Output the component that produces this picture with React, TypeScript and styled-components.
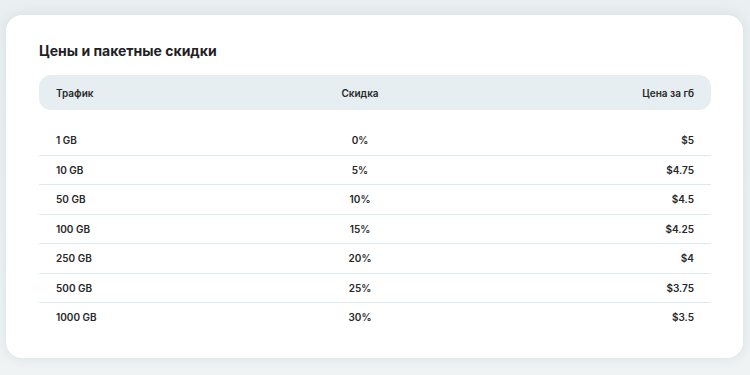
import React from 'react';
import styled, { createGlobalStyle } from 'styled-components';

const GlobalStyle = createGlobalStyle`
  html, body {
    margin: 0;
    padding: 0;
    background: #edf1f3;
    font-family: Inter, "Noto Sans", sans-serif;
  }
`;

type Row = {
  traffic: string;
  discount: string;
  price: string;
};

const rows: Row[] = [
  { traffic: '1 GB', discount: '0%', price: '$5' },
  { traffic: '10 GB', discount: '5%', price: '$4.75' },
  { traffic: '50 GB', discount: '10%', price: '$4.5' },
  { traffic: '100 GB', discount: '15%', price: '$4.25' },
  { traffic: '250 GB', discount: '20%', price: '$4' },
  { traffic: '500 GB', discount: '25%', price: '$3.75' },
  { traffic: '1000 GB', discount: '30%', price: '$3.5' },
];

const Page = styled.div`
  width: 750px;
  height: 375px;
  box-sizing: border-box;
  padding: 15px 7px 17px 6px;
  background: linear-gradient(180deg, #eaeff1 0%, #f0f3f4 100%);
`;

const Card = styled.section`
  height: 100%;
  box-sizing: border-box;
  background: #ffffff;
  border-radius: 16px;
  box-shadow: 0 0 12px rgba(170, 190, 198, 0.35);
  padding: 26px 32px 0 33px;
`;

const Title = styled.h2`
  margin: 0 0 14px;
  font-size: 14px;
  line-height: 20px;
  font-weight: 700;
  color: #1f2224;
`;

const Grid = styled.div`
  display: grid;
  grid-template-columns: 254px 100px 1fr;
  align-items: center;
  padding: 0 17px;
`;

const Head = styled(Grid)`
  height: 35px;
  background: #e6eef1;
  border-radius: 12px;
  margin-bottom: 16px;
`;

const Line = styled(Grid)<{ $last?: boolean }>`
  height: 28.5px;
  border-bottom: ${(p) => (p.$last ? 'none' : '1px solid #dcebef')};
`;

const Cell = styled.span<{ $align?: 'left' | 'center' | 'right' }>`
  font-size: 10px;
  font-weight: 600;
  color: #262829;
  text-align: ${(p) => p.$align || 'left'};
  white-space: nowrap;
`;

export default function App() {
  return (
    <Page>
      <GlobalStyle />
      <Card>
        <Title>Цены и пакетные скидки</Title>
        <Head>
          <Cell>Трафик</Cell>
          <Cell $align="center">Скидка</Cell>
          <Cell $align="right">Цена за гб</Cell>
        </Head>
        {rows.map((r, i) => (
          <Line key={r.traffic} $last={i === rows.length - 1}>
            <Cell>{r.traffic}</Cell>
            <Cell $align="center">{r.discount}</Cell>
            <Cell $align="right">{r.price}</Cell>
          </Line>
        ))}
      </Card>
    </Page>
  );
}
